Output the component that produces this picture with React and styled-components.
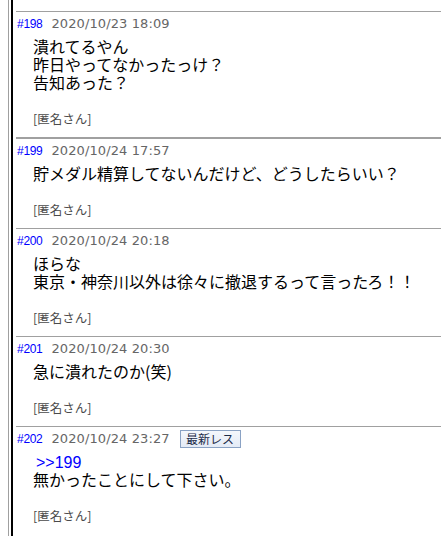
import React from "react";
import styled, { createGlobalStyle } from "styled-components";

const GlobalStyle = createGlobalStyle`
  html, body { margin: 0; padding: 0; background: #fff; }
  body { font-family: "Noto Sans CJK JP", "Noto Sans", sans-serif; }
`;

const Page = styled.div`
  padding-left: 8px;
  min-height: 536px;
`;

const OuterRule = styled.div`
  border-left: 1px solid #a0a0a0;
  padding-left: 2px;
  min-height: 536px;
`;

const Thread = styled.div`
  border-left: 2px solid #000;
  padding: 11px 0 0 3px;
  min-height: 525px;
`;

const Post = styled.div`
  border-top: ${(p) => (p.$thick ? 2 : 1)}px solid #a0a0a0;
  padding: 4px 0 9px 1px;
`;

const Header = styled.div`
  display: flex;
  align-items: center;
  height: 16px;
  line-height: 16px;
  white-space: nowrap;
`;

const Num = styled.span`
  font-family: "Liberation Sans", Arial, sans-serif;
  font-size: 12px;
  color: #0000ff;
  letter-spacing: -0.3px;
`;

const DateText = styled.span`
  font-family: "DejaVu Sans", sans-serif;
  font-size: 13px;
  color: #666;
  margin-left: 9px;
  letter-spacing: 0.1px;
`;

const Badge = styled.span`
  display: inline-flex;
  align-items: center;
  justify-content: center;
  box-sizing: border-box;
  width: 61px;
  height: 18px;
  margin-left: 10px;
  border: 1px solid #8aa2c4;
  background: linear-gradient(#f4f7fc, #e4ebf6);
  color: #1c2b48;
  font-family: "Noto Sans CJK JP", sans-serif;
  font-size: 12px;
  line-height: 16px;
`;

const Body = styled.div`
  margin-top: 5px;
  padding-left: 16px;
  font-family: "Noto Sans CJK JP", sans-serif;
  font-size: 16px;
  line-height: 18px;
  color: #000;
  white-space: nowrap;
`;

const Line = styled.div`
  height: 18px;
`;

const Anchor = styled.a`
  font-family: "Liberation Sans", Arial, sans-serif;
  font-size: 16px;
  color: #0000ff;
  text-decoration: none;
  padding-left: 3px;
`;

const Name = styled.div`
  margin-top: 19px;
  padding-left: 16px;
  height: 18px;
  line-height: 18px;
  font-family: "Noto Sans CJK JP", sans-serif;
  font-size: 12.5px;
  color: #4a4a4a;
`;

const posts = [
  { no: 198, date: "2020/10/23 18:09", lines: ["潰れてるやん", "昨日やってなかったっけ？", "告知あった？"] },
  { no: 199, date: "2020/10/24 17:57", lines: ["貯メダル精算してないんだけど、どうしたらいい？"], thick: true },
  { no: 200, date: "2020/10/24 20:18", lines: ["ほらな", "東京・神奈川以外は徐々に撤退するって言ったろ！！"] },
  { no: 201, date: "2020/10/24 20:30", lines: ["急に潰れたのか(笑)"] },
  { no: 202, date: "2020/10/24 23:27", anchor: ">>199", lines: ["無かったことにして下さい。"], latest: true },
];

export default function App() {
  return (
    <>
      <GlobalStyle />
      <Page>
        <OuterRule>
          <Thread>
            {posts.map((p) => (
              <Post key={p.no} $thick={p.thick}>
                <Header>
                  <Num>#{p.no}</Num>
                  <DateText>{p.date}</DateText>
                  {p.latest && <Badge>最新レス</Badge>}
                </Header>
                <Body>
                  {p.anchor && (
                    <Line>
                      <Anchor href="#">{p.anchor}</Anchor>
                    </Line>
                  )}
                  {p.lines.map((l, i) => (
                    <Line key={i}>{l}</Line>
                  ))}
                </Body>
                <Name>[匿名さん]</Name>
              </Post>
            ))}
          </Thread>
        </OuterRule>
      </Page>
    </>
  );
}
